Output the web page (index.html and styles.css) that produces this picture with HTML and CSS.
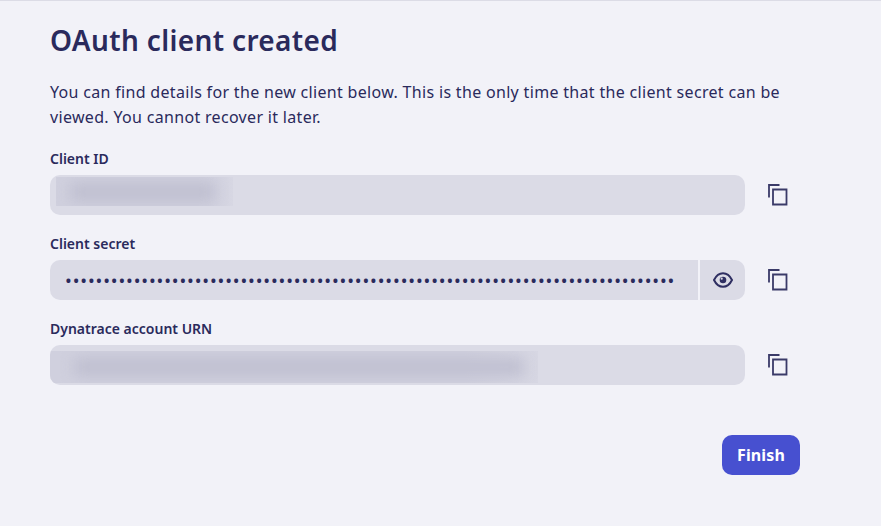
FILE: index.html
```html
<!DOCTYPE html>
<html lang="en">

<head>
  <meta charset="UTF-8">
  <meta name="viewport" content="width=device-width, initial-scale=1.0">
  <title>OAuth client created</title>
  <link rel="stylesheet" href="styles.css">
</head>

<body>
  <div class="page">
    <h2>OAuth client created</h2>
    <p class="intro">You can find details for the new client below. This is the only time that the client secret can be viewed. You cannot recover it later.</p>

    <div class="field">
      <label>Client ID</label>
      <div class="field-row">
        <div class="value">
          <div class="smudge smudge-id"><span></span></div>
        </div>
        <button class="copy" aria-label="Copy client ID">
          <svg viewBox="0 0 20 22" width="20" height="22"><path d="M1 13.500V1H11.500M5 5.500H18.500V20.500H5Z"/></svg>
        </button>
      </div>
    </div>

    <div class="field">
      <label>Client secret</label>
      <div class="field-row">
        <div class="value value-secret">
          <div class="dots">••••••••••••••••••••••••••••••••••••••••••••••••••••••••••••••••••••••••••••••••</div>
          <button class="eye" aria-label="Show client secret">
            <svg viewBox="0 0 20 16" width="20" height="16"><path class="eye-line" d="M1 8C3.200 3.500 6.200 1.200 10 1.200S16.800 3.500 19 8C16.800 12.500 13.800 14.800 10 14.800S3.200 12.500 1 8Z"/><circle class="eye-dot" cx="10" cy="8" r="3.300"/><circle class="eye-glint" cx="8.700" cy="6.700" r="1.100"/></svg>
          </button>
        </div>
        <button class="copy" aria-label="Copy client secret">
          <svg viewBox="0 0 20 22" width="20" height="22"><path d="M1 13.500V1H11.500M5 5.500H18.500V20.500H5Z"/></svg>
        </button>
      </div>
    </div>

    <div class="field">
      <label>Dynatrace account URN</label>
      <div class="field-row">
        <div class="value">
          <div class="smudge smudge-urn"><span></span></div>
        </div>
        <button class="copy" aria-label="Copy account URN">
          <svg viewBox="0 0 20 22" width="20" height="22"><path d="M1 13.500V1H11.500M5 5.500H18.500V20.500H5Z"/></svg>
        </button>
      </div>
    </div>

    <div class="actions">
      <button class="finish">Finish</button>
    </div>
  </div>
</body>

</html>
```

FILE: styles.css
```css
body {
  font-family: "Noto Sans", Arial, sans-serif;
  background-color: #f2f2f8;
  color: #2a2a5c;
  margin: 0;
  height: 526px;
  overflow: hidden;
}

.page {
  border-top: 1px solid #dcdce6;
  padding: 0 81px 0 50px;
}

h2 {
  font-size: 28px;
  line-height: 38px;
  font-weight: 600;
  letter-spacing: 0.35px;
  margin: 20px 0 0;
}

.intro {
  font-size: 16px;
  line-height: 25px;
  letter-spacing: 0.32px;
  margin: 21px 0 0;
  max-width: 750px;
}

.field {
  margin-top: 19px;
}

.field label {
  display: block;
  font-size: 14px;
  line-height: 20px;
  font-weight: 600;
  margin-bottom: 6px;
}

.field-row {
  display: flex;
  align-items: center;
}

.value {
  flex: 1;
  height: 40px;
  background: #dbdbe6;
  border-radius: 10px;
  overflow: hidden;
  display: flex;
}

.value-secret {
  gap: 2px;
  background: #f2f2f8;
}

.dots {
  flex: 1;
  background: #dbdbe6;
  font-size: 18px;
  line-height: 40px;
  padding-left: 15px;
  letter-spacing: 0.86px;
  overflow: hidden;
  white-space: nowrap;
}

.eye {
  width: 45px;
  border: none;
  padding: 0;
  background: #dbdbe6;
  display: flex;
  align-items: center;
  justify-content: center;
}

.eye-line {
  fill: none;
  stroke: #2f2f62;
  stroke-width: 2;
}

.eye-dot {
  fill: #2f2f62;
}

.eye-glint {
  fill: #dbdbe6;
}

.copy {
  width: 55px;
  flex-shrink: 0;
  border: none;
  padding: 0 0 0 23px;
  background: none;
  display: flex;
  align-items: center;
  justify-content: flex-start;
}

.copy svg {
  fill: none;
  stroke: #3a3a68;
  stroke-width: 1.800;
}

/* redacted values */
.smudge {
  box-sizing: border-box;
  background: linear-gradient(to right, #d0d0de, #d0d0de 85%, #d7d7e3);
  overflow: hidden;
  display: flex;
  align-items: center;
}

.smudge span {
  display: block;
  height: 18px;
  background: #bfbfd0;
  filter: blur(7px);
}

.smudge-id {
  width: 177px;
  height: 29px;
  margin: 2px 0 0 6px;
  padding-left: 14px;
}

.smudge-id span {
  width: 145px;
}

.smudge-urn {
  width: 488px;
  height: 32px;
  margin-top: 6px;
  padding-left: 24px;
}

.smudge-urn span {
  width: 450px;
}

.actions {
  display: flex;
  justify-content: flex-end;
  margin-top: 50px;
}

.finish {
  width: 78px;
  height: 40px;
  background: #4750d0;
  color: white;
  border: none;
  border-radius: 10px;
  font-family: inherit;
  font-size: 16px;
  font-weight: 700;
  letter-spacing: 0.1px;
}
```
